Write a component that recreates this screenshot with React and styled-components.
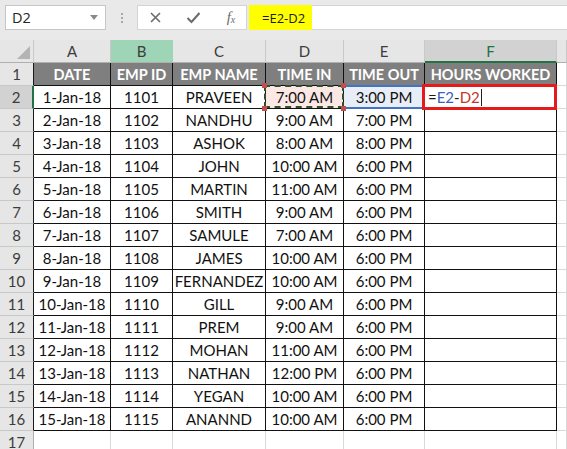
import React from 'react';
import styled, { createGlobalStyle, css } from 'styled-components';

const COLS = '34px 77px 62px 93px 78px 81px 132px 1fr';
const GREEN = '#217346';

const rows = [
  ['1-Jan-18', '1101', 'PRAVEEN', '7:00 AM', '3:00 PM'],
  ['2-Jan-18', '1102', 'NANDHU', '9:00 AM', '7:00 PM'],
  ['3-Jan-18', '1103', 'ASHOK', '8:00 AM', '8:00 PM'],
  ['4-Jan-18', '1104', 'JOHN', '10:00 AM', '6:00 PM'],
  ['5-Jan-18', '1105', 'MARTIN', '11:00 AM', '6:00 PM'],
  ['6-Jan-18', '1106', 'SMITH', '9:00 AM', '6:00 PM'],
  ['7-Jan-18', '1107', 'SAMULE', '7:00 AM', '6:00 PM'],
  ['8-Jan-18', '1108', 'JAMES', '10:00 AM', '6:00 PM'],
  ['9-Jan-18', '1109', 'FERNANDEZ', '10:00 AM', '6:00 PM'],
  ['10-Jan-18', '1110', 'GILL', '9:00 AM', '6:00 PM'],
  ['11-Jan-18', '1111', 'PREM', '9:00 AM', '6:00 PM'],
  ['12-Jan-18', '1112', 'MOHAN', '11:00 AM', '6:00 PM'],
  ['13-Jan-18', '1113', 'NATHAN', '12:00 PM', '6:00 PM'],
  ['14-Jan-18', '1114', 'YEGAN', '10:00 AM', '6:00 PM'],
  ['15-Jan-18', '1115', 'ANANND', '10:00 AM', '6:00 PM'],
];

const titles = ['DATE', 'EMP ID', 'EMP NAME', 'TIME IN', 'TIME OUT', 'HOURS WORKED'];
const letters = ['A', 'B', 'C', 'D', 'E', 'F', ''];

const GlobalStyle = createGlobalStyle`
  html, body {
    margin: 0;
    background: #ffffff;
  }
  body {
    font-family: Lato, "Liberation Sans", sans-serif;
    overflow: hidden;
  }
`;

export default function App() {
  return (
    <Window>
      <GlobalStyle />
      <FormulaBar>
        <NameBox>
          <span>D2</span>
          <DropArrow />
        </NameBox>
        <Grip>
          <i /><i /><i />
        </Grip>
        <Buttons>
          <IconBtn>
            <svg width="13" height="13" viewBox="0 0 13 13">
              <path d="M2 2 L11 11 M11 2 L2 11" stroke="#6b6b6b" strokeWidth="1.6" fill="none" />
            </svg>
          </IconBtn>
          <IconBtn>
            <svg width="15" height="13" viewBox="0 0 15 13">
              <path d="M1.5 7 L5.5 11 L13.5 2" stroke="#6b6b6b" strokeWidth="2" fill="none" />
            </svg>
          </IconBtn>
          <IconBtn>
            <Fx>f<sub>x</sub></Fx>
          </IconBtn>
        </Buttons>
        <FormulaInput>
          <Highlight>=E2-D2</Highlight>
        </FormulaInput>
      </FormulaBar>

      <Sheet>
        <Row>
          <Corner>
            <svg width="13" height="13" viewBox="0 0 13 13">
              <path d="M13 0 L13 13 L0 13 Z" fill="#b4b4b4" />
            </svg>
          </Corner>
          {letters.map((l, i) => (
            <ColHead key={i} $ref={l === 'B'} $active={l === 'F'}>{l}</ColHead>
          ))}
        </Row>

        <Row>
          <RowHead $data>1</RowHead>
          {titles.map(t => (
            <Cell key={t} $data $title>{t}</Cell>
          ))}
          <Cell />
        </Row>

        {rows.map((r, i) => {
          const n = i + 2;
          const first = n === 2;
          return (
            <Row key={n}>
              <RowHead $data $active={first}>{n}</RowHead>
              <Cell $data>{r[0]}</Cell>
              <Cell $data>{r[1]}</Cell>
              <Cell $data>{r[2]}</Cell>
              <Cell $data $state={first ? 'cut' : undefined}>
                {r[3]}
                {first && (
                  <>
                    <Handle $top $left />
                    <Handle $top />
                    <Handle $left />
                    <Handle />
                  </>
                )}
              </Cell>
              <Cell $data $state={first ? 'ref' : undefined}>{r[4]}</Cell>
              <Cell $data $state={first ? 'edit' : undefined}>
                {first && (
                  <Formula>
                    =<RefE>E2</RefE>-<RefD>D2</RefD><Caret />
                  </Formula>
                )}
              </Cell>
              <Cell />
            </Row>
          );
        })}

        <Row>
          <RowHead>17</RowHead>
          {letters.map((l, i) => <Cell key={i} />)}
        </Row>
      </Sheet>
    </Window>
  );
}

const Window = styled.div`
  width: 567px;
  height: 449px;
  overflow: hidden;
  background: #ffffff;
`;

const FormulaBar = styled.div`
  height: 40px;
  box-sizing: border-box;
  padding: 5px 0 10px 5px;
  display: flex;
  align-items: stretch;
  background: #e9e9e9;
`;

const NameBox = styled.div`
  width: 101px;
  box-sizing: border-box;
  border: 1px solid #c6c6c6;
  background: #ffffff;
  display: flex;
  align-items: center;
  justify-content: space-between;
  padding: 0 7px 0 6px;
  font-family: "Open Sans", sans-serif;
  font-size: 14.5px;
  color: #262626;
`;

const DropArrow = styled.span`
  width: 0;
  height: 0;
  border-left: 4px solid transparent;
  border-right: 4px solid transparent;
  border-top: 5px solid #8a8a8a;
`;

const Grip = styled.div`
  width: 31px;
  display: flex;
  flex-direction: column;
  align-items: center;
  justify-content: center;
  gap: 2px;

  i {
    width: 2px;
    height: 2px;
    background: #a8a8a8;
  }
`;

const Buttons = styled.div`
  width: 110px;
  box-sizing: border-box;
  border: 1px solid #d4d4d4;
  background: #ffffff;
  display: flex;
  align-items: center;
  gap: 14px;
  padding-left: 5px;
`;

const IconBtn = styled.span`
  display: flex;
  align-items: center;
  justify-content: center;
  width: 24px;
`;

const Fx = styled.span`
  font-family: "Liberation Serif", serif;
  font-style: italic;
  font-size: 15px;
  color: #6b6b6b;
  line-height: 1;

  sub {
    font-size: 10px;
    vertical-align: -1px;
  }
`;

const FormulaInput = styled.div`
  flex: 1;
  margin-left: 2px;
  box-sizing: border-box;
  border-top: 1px solid #d4d4d4;
  border-bottom: 1px solid #d4d4d4;
  background: #ffffff;
  display: flex;
`;

const Highlight = styled.span`
  width: 63px;
  margin: -1px 0;
  background: #ffff00;
  box-sizing: border-box;
  padding-left: 13px;
  display: flex;
  align-items: center;
  white-space: nowrap;
  font-family: "Open Sans", sans-serif;
  font-size: 13px;
  color: #1a1a1a;
`;

const Sheet = styled.div`
  display: flex;
  flex-direction: column;
`;

const Row = styled.div`
  display: grid;
  grid-template-columns: ${COLS};
  height: 23px;
`;

const baseCell = css`
  box-sizing: border-box;
  display: flex;
  align-items: center;
  justify-content: center;
  font-size: 15px;
  white-space: nowrap;
  overflow: visible;
`;

const Corner = styled.div`
  ${baseCell};
  background: #e6e6e6;
  border-right: 1px solid #c8c8c8;
  border-bottom: 1px solid #b0b0b0;
  justify-content: flex-end;
  align-items: flex-end;
  padding: 0 3px 3px 0;
`;

const ColHead = styled.div`
  ${baseCell};
  background: ${p => (p.$ref ? '#9fd5b7' : p.$active ? '#d2d2d2' : '#e6e6e6')};
  color: ${p => (p.$active ? GREEN : '#3c3c3c')};
  border-right: 1px solid ${p => (p.$ref ? '#9fd5b7' : '#c8c8c8')};
  border-bottom: ${p => (p.$active ? `2px solid ${GREEN}` : '1px solid #b0b0b0')};
`;

const RowHead = styled.div`
  ${baseCell};
  background: ${p => (p.$active ? '#d2d2d2' : '#e6e6e6')};
  color: #3c3c3c;
  border-bottom: 1px solid #c8c8c8;
  border-right: ${p => (p.$active ? `2px solid ${GREEN}` : p.$data ? '1px solid #1a1a1a' : '1px solid #b0b0b0')};
`;

const states = {
  cut: css`
    position: relative;
    background: #fbe7e3;
    &::after {
      content: '';
      position: absolute;
      inset: -1px -1px 0 -2px;
      border: 2px dashed #2f4f2f;
    }
  `,
  ref: css`
    background: #e8eef8;
    border-top: 2px solid #4472c4;
    border-bottom: 2px solid #4472c4;
    margin-top: -1px;
  `,
  edit: css`
    position: relative;
    justify-content: flex-start;
    padding-left: 3px;
    &::after {
      content: '';
      position: absolute;
      inset: -2px -1px -2px -3px;
      border: 3px solid #e31b1b;
    }
  `,
};

const Cell = styled.div`
  ${baseCell};
  color: #111111;
  border-right: 1px solid ${p => (p.$data ? '#111111' : '#d9d9d9')};
  border-bottom: 1px solid ${p => (p.$data ? '#111111' : '#d9d9d9')};
  ${p => p.$title && css`
    background: #7f7f7f;
    color: #ffffff;
    font-weight: 700;
    font-size: 14.5px;
  `}
  ${p => p.$state && states[p.$state]}
`;

const Handle = styled.span`
  position: absolute;
  z-index: 2;
  width: 5px;
  height: 5px;
  background: #c0504d;
  ${p => (p.$top ? 'top: -3px;' : 'bottom: -3px;')}
  ${p => (p.$left ? 'left: -4px;' : 'right: -3px;')}
`;

const Formula = styled.span`
  display: flex;
  align-items: center;
  color: #1a1a1a;
`;

const RefE = styled.span`
  color: #3f5fbf;
`;

const RefD = styled.span`
  color: #c0392b;
`;

const Caret = styled.span`
  width: 1px;
  height: 17px;
  margin-left: 1px;
  background: #222222;
`;
